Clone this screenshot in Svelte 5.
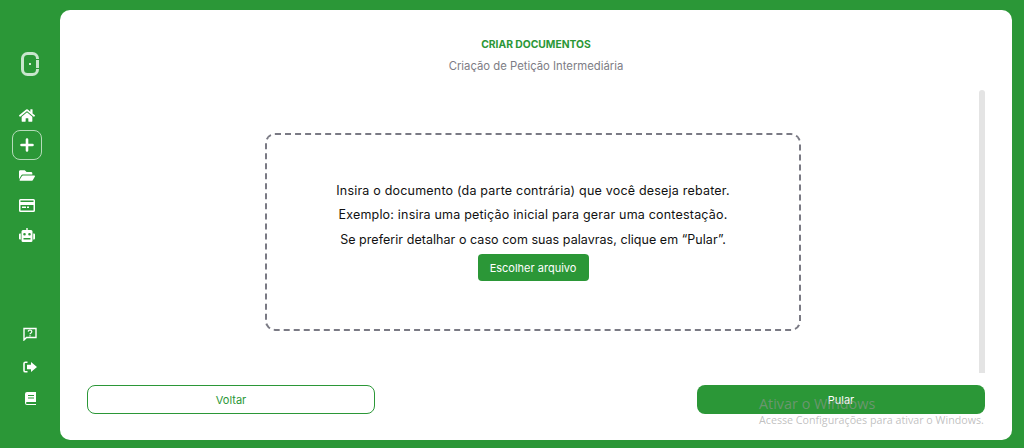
<script>
  const topItems = [
    { id: 'folder', vb: '0 0 576 512', w: 16, h: 15, d: 'M572.694 292.093L500.27 416.248A63.997 63.997 0 0 1 444.989 448H45.025c-18.523 0-30.064-20.093-20.731-36.093l72.424-124.155A64 64 0 0 1 152 256h399.964c18.523 0 30.064 20.093 20.73 36.093zM152 224h328v-48c0-26.51-21.49-48-48-48H272l-64-64H48C21.49 64 0 85.49 0 112v278.046l69.077-118.418C86.214 242.25 117.989 224 152 224z' },
    { id: 'card', vb: '0 0 16 13', w: 16, h: 13, d: 'M1.5 0h13A1.5 1.5 0 0 1 16 1.5v10a1.5 1.5 0 0 1-1.5 1.5h-13A1.5 1.5 0 0 1 0 11.5v-10A1.5 1.5 0 0 1 1.5 0zM1.5 1.5V3h13V1.5zM1.5 6v5.5h13V6zM3 7.5h4V9H3zM8 7.5h2V9H8z' },
    { id: 'robot', vb: '0 0 16 14', w: 16, h: 14, d: 'M7.3 0h1.4v2H12a1.5 1.5 0 0 1 1.5 1.5v9A1.5 1.5 0 0 1 12 14H4a1.5 1.5 0 0 1-1.5-1.5v-9A1.5 1.5 0 0 1 4 2h3.3zM5.5 5a1.3 1.3 0 1 0 0 2.6 1.3 1.3 0 0 0 0-2.6zM10.5 5a1.3 1.3 0 1 0 0 2.6 1.3 1.3 0 0 0 0-2.6zM4.5 10v1.5h7V10zM0 6.5A1 1 0 0 1 1 5.500h.8v6H1a1 1 0 0 1-1-1zM14.200 5.500h.8a1 1 0 0 1 1 1v4a1 1 0 0 1-1 1h-.8z' }
  ];
  const homePath = 'M280.37 148.26L96 300.11V464a16 16 0 0 0 16 16l112.06-.29a16 16 0 0 0 15.92-16V368a16 16 0 0 1 16-16h64a16 16 0 0 1 16 16v95.64a16 16 0 0 0 16 16.05L464 480a16 16 0 0 0 16-16V300L295.67 148.26a12.19 12.19 0 0 0-15.3 0zM571.6 251.47L488 182.56V44.05a12 12 0 0 0-12-12h-56a12 12 0 0 0-12 12v72.61L318.47 43a48 48 0 0 0-61 0L4.34 251.47a12 12 0 0 0-1.6 16.9l25.5 31A12 12 0 0 0 45.15 301l235.22-193.74a12.19 12.19 0 0 1 15.3 0L530.9 301a12 12 0 0 0 16.9-1.6l25.5-31a12 12 0 0 0-1.7-16.93z';
</script>

<div class="page">
  <nav class="sidebar">
    <svg class="logo" viewBox="0 0 18 24" width="18" height="24" aria-hidden="true">
      <rect x="1.5" y="1.5" width="15" height="21" rx="5" fill="none" stroke="#c9e6cd" stroke-width="3" />
      <rect x="8" y="11" width="2" height="2" fill="#d5ecd8" />
      <path d="M14 7.500h4M14 16.500h4" stroke="#2b9737" stroke-width="1" />
    </svg>

    <div class="nav-top">
      <a class="nav-item" href="#home" aria-label="home">
        <svg viewBox="0 0 576 512" width="16" height="15"><path d={homePath} fill="#fff" /></svg>
      </a>
      <a class="nav-item active" href="#new" aria-label="novo">
        <svg viewBox="0 0 16 16" width="16" height="16"><path d="M8 2.500v11M2.500 8h11" stroke="#fff" stroke-width="2.600" stroke-linecap="round" /></svg>
      </a>
      {#each topItems as item}
        <a class="nav-item" href="#{item.id}" aria-label={item.id}>
          <svg viewBox={item.vb} width={item.w} height={item.h}><path d={item.d} fill="#fff" fill-rule="evenodd" /></svg>
        </a>
      {/each}
    </div>

    <div class="nav-bottom">
      <a class="nav-item" href="#help" aria-label="ajuda">
        <svg viewBox="0 0 14 14" width="14" height="14">
          <path d="M1 1.500h12v9H3.500L1 13z" fill="none" stroke="#fff" stroke-width="1.400" />
          <path d="M5.200 4.600a1.800 1.600 0 1 1 2.800 1.400c-.7.4-1 .7-1 1.300M7 8.200v1.200" fill="none" stroke="#fff" stroke-width="1.200" />
        </svg>
      </a>
      <a class="nav-item logout" href="#sair" aria-label="sair">
        <svg viewBox="0 0 14 12" width="14" height="12">
          <path d="M4.500 1.200H2.400A1.400 1.400 0 0 0 1 2.600v6.800a1.400 1.400 0 0 0 1.400 1.400h2.100" fill="none" stroke="#fff" stroke-width="1.600" />
          <path d="M8 1l6 5-6 5V8.200H4V3.800h4z" fill="#fff" />
        </svg>
      </a>
      <a class="nav-item" href="#livro" aria-label="livro">
        <svg viewBox="0 0 11 13" width="11" height="13">
          <path d="M2 0h9v10H2a1 1 0 0 0 0 2h9v1H2a2 2 0 0 1-2-2V2a2 2 0 0 1 2-2zM3 3v1h6V3zM3 5.500v1h6v-1z" fill="#fff" fill-rule="evenodd" />
        </svg>
      </a>
    </div>
  </nav>

  <main class="panel">
    <header class="heading">
      <h1>CRIAR DOCUMENTOS</h1>
      <p>Criação de Petição Intermediária</p>
    </header>

    <div class="body">
      <div class="content">
        <section class="dropzone">
          <p>Insira o documento (da parte contrária) que você deseja rebater.</p>
          <p>Exemplo: insira uma petição inicial para gerar uma contestação.</p>
          <p class="last">Se preferir detalhar o caso com suas palavras, clique em “Pular”.</p>
          <button class="choose" type="button">Escolher arquivo</button>
        </section>
      </div>
      <div class="scrollbar"></div>
    </div>

    <footer class="actions">
      <button class="btn outline" type="button">Voltar</button>
      <button class="btn solid" type="button">Pular</button>
    </footer>
  </main>

  <div class="watermark">
    <div class="wm-title">Ativar o Windows</div>
    <div class="wm-sub">Acesse Configurações para ativar o Windows.</div>
  </div>
</div>

<style>
  :global(body) {
    margin: 0;
    background: #2b9737;
  }

  .page {
    position: relative;
    display: flex;
    width: 1024px;
    height: 448px;
    overflow: hidden;
    background: #2b9737;
    font-family: "Inter", "Open Sans", sans-serif;
  }

  .sidebar {
    display: flex;
    flex-direction: column;
    align-items: center;
    width: 60px;
    padding: 52px 6px 0 0;
    box-sizing: border-box;
    flex: none;
  }

  .logo {
    flex: none;
    margin-left: 6px;
  }

  .nav-top {
    display: flex;
    flex-direction: column;
    align-items: center;
    margin-top: 24px;
  }

  .nav-top .nav-item {
    height: 30px;
  }

  .nav-top .active {
    width: 30px;
    height: 30px;
    border: 1px solid #b5dcba;
    border-radius: 8px;
    box-sizing: border-box;
  }

  .nav-bottom {
    display: flex;
    flex-direction: column;
    align-items: center;
    margin: 68px 0 0 6px;
  }

  .nav-bottom .nav-item {
    height: 32px;
  }

  .nav-bottom .logout {
    padding-top: 2px;
    box-sizing: border-box;
  }

  .nav-item {
    display: flex;
    align-items: center;
    justify-content: center;
    width: 30px;
  }

  .panel {
    display: flex;
    flex-direction: column;
    width: 952px;
    height: 430px;
    margin-top: 10px;
    padding: 0 27px;
    box-sizing: border-box;
    border-radius: 10px;
    background: #fff;
  }

  .heading {
    padding-top: 27px;
    text-align: center;
  }

  h1 {
    margin: 0;
    color: #2b9737;
    font-size: 10.300px;
    line-height: 14px;
    font-weight: 700;
  }

  .heading p {
    margin: 8px 0 0;
    color: #7d7d85;
    font-size: 11.300px;
    line-height: 14px;
  }

  .body {
    display: flex;
    height: 283px;
    margin-top: 17px;
  }

  .content {
    flex: 1;
    display: flex;
    justify-content: center;
    padding-top: 43px;
  }

  .scrollbar {
    width: 6px;
    flex: none;
    border-radius: 3px 3px 0 0;
    background: #e4e4e4;
  }

  .dropzone {
    display: flex;
    flex-direction: column;
    align-items: center;
    justify-content: center;
    width: 536px;
    height: 198px;
    box-sizing: border-box;
    border: 2px dashed #7a7a84;
    border-radius: 10px;
  }

  .dropzone p {
    margin: 0 0 9.500px;
    color: #111;
    font-size: 12.500px;
    line-height: 15px;
    letter-spacing: 0.2px;
    white-space: nowrap;
  }

  .dropzone p.last {
    margin-bottom: 7.500px;
    letter-spacing: 0.05px;
  }

  .choose {
    width: 111px;
    height: 27px;
    border: 0;
    border-radius: 4px;
    background: #2b9737;
    color: #fff;
    font: inherit;
    font-size: 11px;
  }

  .actions {
    display: flex;
    justify-content: space-between;
    margin-top: 12px;
  }

  .btn {
    width: 288px;
    height: 29px;
    box-sizing: border-box;
    border-radius: 8px;
    font: inherit;
    font-size: 11px;
  }

  .outline {
    border: 1px solid #2b9737;
    background: #fff;
    color: #2b9737;
  }

  .solid {
    border: 0;
    background: #2b9737;
    color: #fff;
  }

  .watermark {
    position: absolute;
    left: 759px;
    top: 395px;
    pointer-events: none;
    font-family: "Open Sans", sans-serif;
    color: rgba(150, 150, 150, 0.6);
  }

  .wm-title {
    font-size: 14.400px;
    line-height: 18px;
  }

  .wm-sub {
    font-size: 10.700px;
    line-height: 14px;
  }
</style>
